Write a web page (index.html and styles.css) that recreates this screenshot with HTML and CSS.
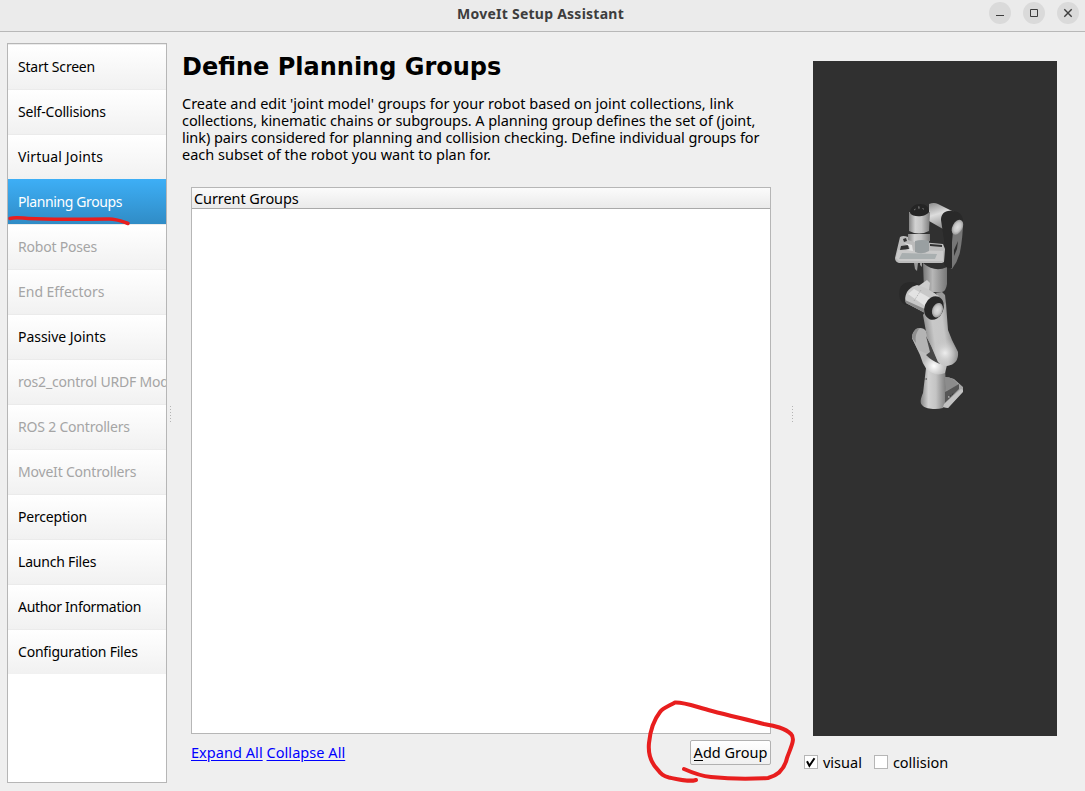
FILE: index.html
```html
<!DOCTYPE html>
<html lang="en">
<head>
<meta charset="utf-8">
<title>MoveIt Setup Assistant</title>
<link rel="stylesheet" href="styles.css">
</head>
<body>
<div class="window">
  <header class="titlebar">
    <h1 class="title">MoveIt Setup Assistant</h1>
    <div class="controls">
      <span class="control"><svg width="22" height="22"><path d="M7 13.500h8" /></svg></span>
      <span class="control"><svg width="22" height="22"><path d="M7.500 7.500h7v7h-7z" /></svg></span>
      <span class="control"><svg class="close" width="22" height="22"><path d="M7.300 7.300l7.400 7.400M14.700 7.300l-7.400 7.400" /></svg></span>
    </div>
  </header>
  <main class="content">
    <nav class="sidebar">
      <a class="item">Start Screen</a>
      <a class="item">Self-Collisions</a>
      <a class="item loose">Virtual Joints</a>
      <a class="item selected">Planning Groups</a>
      <a class="item disabled">Robot Poses</a>
      <a class="item disabled roomy">End Effectors</a>
      <a class="item roomy">Passive Joints</a>
      <a class="item disabled">ros2_control URDF Modifications</a>
      <a class="item disabled">ROS 2 Controllers</a>
      <a class="item disabled">MoveIt Controllers</a>
      <a class="item">Perception</a>
      <a class="item">Launch Files</a>
      <a class="item tight">Author Information</a>
      <a class="item">Configuration Files</a>
    </nav>
    <div class="splitter left"></div>
    <section class="page">
      <h2 class="heading">Define Planning Groups</h2>
      <p class="intro">Create and edit 'joint model' groups for your robot based on joint collections, link<br><span class="snug">collections, kinematic chains or subgroups. A planning group defines the set of (joint,</span><br><span class="snug">link) pairs considered for planning and collision checking. Define individual groups for</span><br>each subset of the robot you want to plan for.</p>
      <div class="tree"><div class="tree-head">Current Groups</div></div>
      <div class="actions">
        <div class="links"><a>Expand All</a> <a>Collapse All</a></div>
        <button class="add"><span class="mnemonic">A</span>dd Group</button>
      </div>
    </section>
    <div class="splitter right"></div>
    <aside class="viewer">
      <svg class="scene" viewBox="813 61 244 675" width="244" height="675">
        <defs>
          <linearGradient id="tube"><stop offset="0" stop-color="#858585"/><stop offset=".3" stop-color="#d2d2d2"/><stop offset=".6" stop-color="#c4c4c4"/><stop offset="1" stop-color="#7c7c7c"/></linearGradient>
          <linearGradient id="dim"><stop offset="0" stop-color="#777"/><stop offset=".4" stop-color="#b7b7b7"/><stop offset="1" stop-color="#777"/></linearGradient>
          <linearGradient id="arm" x1=".3" y1="0" x2=".6" y2="1"><stop offset="0" stop-color="#999"/><stop offset=".4" stop-color="#ddd"/><stop offset="1" stop-color="#858585"/></linearGradient>
          <linearGradient id="upper" gradientUnits="userSpaceOnUse" x1="923" y1="330" x2="952" y2="326"><stop offset="0" stop-color="#858585"/><stop offset=".35" stop-color="#c8c8c8"/><stop offset=".7" stop-color="#c6c6c6"/><stop offset="1" stop-color="#8c8c8c"/></linearGradient>
          <radialGradient id="cap"><stop offset="0" stop-color="#ddd"/><stop offset=".6" stop-color="#c8c8c8"/><stop offset="1" stop-color="#999"/></radialGradient>
          <radialGradient id="elbow" gradientUnits="userSpaceOnUse" cx="945" cy="353" r="15"><stop offset="0" stop-color="#eee"/><stop offset=".4" stop-color="#d4d4d4" stop-opacity=".8"/><stop offset="1" stop-color="#c0c0c0" stop-opacity="0"/></radialGradient>
          <radialGradient id="glow" gradientUnits="userSpaceOnUse" cx="934" cy="366" r="11"><stop offset="0" stop-color="#fff"/><stop offset="1" stop-color="#fff" stop-opacity="0"/></radialGradient>
        </defs>
        <g class="base">
          <path fill="#a6a6a6" d="M944 377q5 0 10 2l9 8v4l-15 17-5-1z"/>
          <path fill="url(#tube)" d="M926 368h19l1 19-1 18-2 3c-7 2-17 1-20-2-4-3-2-8 0-13z"/>
          <path fill="#8c8c8c" d="M945 377q4 0 8 2 5 4 5 6l-12 6z"/>
          <path fill="#555" d="M945 392l14-8v5l-14 14z"/>
          <path fill="#c2c2c2" d="M944 404l17-15 2 1v2l-15 16-5-1z"/>
          <path stroke="#333" stroke-width="1" stroke-dasharray="1.500 1" d="M948 398l6-5M921.500 387v4M923 379h4" fill="none"/>
          <path stroke="#eee" d="M948 397h1.500" fill="none"/>
        </g>
        <g class="shoulder">
          <path fill="#bdbdbd" d="M912 338l12-4 23 31-2 8q-9 4-18-3-5-7-7-15z"/>
          <path fill="url(#glow)" d="M920 355l27 10-2 8q-9 4-18-3-5-7-7-15z"/>
          <path fill="#b4b4b4" d="M912 338c0-5 3-10 8-10q4 0 6 3l7 19-3 5-12-5z"/>
          <path fill="#8e8e8e" d="M912 338c0-5 3-10 8-10-4 4-5 9-4 15z"/>
          <path fill="#474747" d="M926 336l6 11 8 17q-8-3-14-9l4-3z"/>
          <path fill="url(#upper)" d="M923 315q12-20 23-12l1 14 1 13 4 10 6 12q1 12-11 14-5 0-9-4l-6-14-5-11z"/>
          <path fill="url(#elbow)" d="M932 338h19l7 14q1 12-11 14-5 0-9-4l-6-14z"/>
        </g>
        <g class="middle">
          <path fill="url(#dim)" d="M923 263q12 10 24 4v17q-1 7-5 8-10 1-18-2z"/>
          <path fill="#cecece" d="M917 287l10-7 3 3-1 8-6 2z"/>
          <path fill="#999" d="M936 293l6-1 3 3 1 9-4 1z"/>
          <path fill="#292929" d="M899.500 297c-1-8 1-12 6-14q6-2 11 0l3 3-13 19c-4-1-6-4-7-8z"/>
          <path fill="#c8c8c8" d="M907 292q3-5 10-7 11 3 22 11l-12 18-21-11q-2-5 1-11z"/>
          <path fill="#e3e3e3" d="M908 294l6-5 16 9-5 8z"/>
          <path fill="#8a8a8a" d="M905 300l22 10v4l-21-11z"/>
          <path stroke="#999" stroke-width=".7" stroke-dasharray="1 1" d="M921 290l-7 11" fill="none"/>
          <ellipse cx="934" cy="308" rx="9.500" ry="12" transform="rotate(22 934 308)" fill="#272727"/>
          <ellipse cx="937.500" cy="310" rx="5.300" ry="7.500" transform="rotate(20 937 310)" fill="url(#cap)"/>
        </g>
        <g class="wrist">
          <path fill="url(#arm)" d="M929 204q5-2 9 0l16 8-11 17-14-8z"/>
          <path fill="#777" d="M946 232l17-10q0 14-3 30-2 9-8 17l-6-4z"/>
          <path fill="#292929" d="M941 220c0-6 4-10 11-9 7 0 11 4 11 10l-10 10-1 11v26c-4 1-7-1-8-4l1-10-1-14z"/>
          <path fill="#303030" d="M954 250l4-9-1 8-3 7z"/>
          <ellipse cx="957.500" cy="227" rx="5" ry="8" transform="rotate(28 957 227)" fill="url(#cap)"/>
        </g>
        <g class="hand">
          <path fill="#bbb" d="M900 237q3-2 8 0l13 5 22 2 2 5-1 13-2 1h-43q-4-1-4-5z"/>
          <path fill="#333" d="M903 239l3-1 1 3-3 1zM901 246l7-1 1 4-9 1zM930 244l12 1v2l-12-1z"/>
          <path fill="#cacaca" d="M898 250l45 1v10h-44l-3-3z"/>
          <path fill="#a9afb0" d="M902 253l35 1-2 5h-36z"/>
          <path fill="#999" d="M914 263h4l-1 8-2-2zM920 263h2v4l-2-2z"/>
          <path fill="#e4e4e4" d="M904 243l8 2 1 6-7-1 4-1-1-3z"/>
          <path fill="url(#tube)" d="M908 234h22v7q-10 4-22-1z"/>
          <path fill="#999fa1" d="M915 241q7-2 14 0v10q-7 4-14 1z"/>
          <path fill="url(#tube)" d="M909 212h21l-1 19q-10 5-20 0z"/>
          <path fill="#252525" d="M910 213c0-6 5-9 10-9 6 0 9 3 9 8-3 5-16 6-19 1z"/>
          <path fill="none" stroke="#999" stroke-width=".8" stroke-dasharray="1.500 3" d="M914 210q6-4 11 0M918 207h2"/>
        </g>
      </svg>
      <div class="checks">
        <label class="check"><span class="box"><svg width="12" height="12"><path d="M2 5.300l2.400 4.500L9.500 2.200"/></svg></span><span>visual</span></label>
        <label class="check"><span class="box"></span><span>collision</span></label>
      </div>
    </aside>
  </main>
  <svg class="annotations" width="1085" height="791" viewBox="0 0 1085 791">
    <path class="thin" d="M10 218.500C15 217 20 218 28 218.500C55 220 83 219 109 219C117 219 121 221 128 223.500"/>
    <path d="M696 780C689 782 681 780 669 777.500C663 776 661 774 658 770C651 763 648 753 649 743C650 732 653 721 660 712C663 708 669 706 675 702.500C685 702 696 707 712 711C731 716 749 720 764 724C775 726 785 728 791 734C796 739 790 749 787 758C785 767 780 775 768 778C750 779 731 779 711 777C701 776 693 773 684 769"/>
  </svg>
</div>
</body>
</html>
```
FILE: styles.css
```css
* { box-sizing: border-box; }
body { margin: 0; background: #efefef; color: #000; font: 14px/17px "Noto Sans", sans-serif; }
.window { position: relative; width: 1085px; height: 791px; overflow: hidden; display: flex; flex-direction: column; }
.titlebar { height: 32px; flex: none; background: #ebebeb; border-bottom: 1px solid #b8b8b8; display: grid; grid-template-columns: 1fr auto 1fr; }
.title { grid-column: 2; margin: 0; padding: 5px 4px 0 0; font-size: 14px; line-height: 18px; font-weight: 700; color: #3d3d3d; letter-spacing: .25px; white-space: nowrap; }
.controls { display: flex; justify-content: flex-end; gap: 12px; padding: 2px 6px 0 0; }
.control { width: 22px; height: 22px; border-radius: 50%; background: #dadada; }
.control svg { display: block; fill: none; stroke: #3d3d3d; stroke-width: 1; }
.control .close { stroke-width: 1.400; }
.content { flex: 1; display: flex; padding-left: 7px; }
.sidebar { width: 160px; height: 740px; margin-top: 11px; border: 1px solid #b6b6b6; background: #fff; overflow: hidden; }
.item { display: block; height: 45px; padding: 13px 0 0 10px; border-top: 1px solid #ebebeb; background: linear-gradient(#fff, #f1f1f1); white-space: nowrap; letter-spacing: -.2px; }
.item.loose { letter-spacing: .15px; }
.item.roomy { letter-spacing: -.03px; }
.item.tight { letter-spacing: -.3px; }
.item.selected { color: #fff; background: linear-gradient(#3daef5, #308cc6); border-color: #3daef5; letter-spacing: -.39px; }
.item.disabled { color: #a5a5a5; }
.splitter { width: 3px; height: 16px; margin-top: 374px; background: repeating-linear-gradient(#b4b4b4 0 1px, transparent 1px 3px) 1px 0 / 1px 16px no-repeat; }
.splitter.left { margin-left: 2px; }
.page { width: 589px; margin-left: 10px; }
.heading { margin: 19px 0 0; font: 700 24px/32px "DejaVu Sans", sans-serif; white-space: nowrap; }
.intro { margin: 12px 0 0; height: 68px; white-space: nowrap; font-size: 14.500px; line-height: 17px; }
.snug { letter-spacing: -.07px; }
.tree { height: 547px; margin: 24px 0 0 9px; border: 1px solid #b6b6b6; background: #fff; }
.tree-head { height: 21px; padding: 2px; border-bottom: 1px solid #a9a9a9; background: linear-gradient(#fbfbfb, #eaeaea); font-size: 14.500px; letter-spacing: -.08px; }
.actions { display: flex; justify-content: space-between; padding: 6px 0 0 9px; font-size: 14.500px; }
.links { padding-top: 4px; letter-spacing: .05px; }
.links a { color: #00f; text-decoration: underline; text-underline-offset: 2px; }
.add { width: 81px; height: 25px; padding: 0; border: 1px solid #b1b1b1; border-radius: 2px; background: linear-gradient(#fff, #f0f0f0); color: #000; font: 14.500px/21px "Noto Sans", sans-serif; white-space: nowrap; }
.mnemonic { border-bottom: 1px solid #000; display: inline-block; line-height: 16px; }
.splitter.right { margin-left: 20px; }
.viewer { width: 253px; margin-left: 10px; }
.scene { display: block; margin: 29px 0 0 9px; background: #303030; }
.checks { display: flex; gap: 12px; padding-top: 18px; font-size: 14.500px; }
.check { display: flex; gap: 5px; }
.box { width: 14px; height: 14px; margin-top: 1px; border: 1px solid #b6b6b6; background: #fff; flex: none; }
.box svg { display: block; fill: none; stroke: #000; stroke-width: 2; }
.annotations { position: absolute; inset: 0; pointer-events: none; fill: none; stroke: #e81e1e; stroke-width: 4; stroke-linecap: round; stroke-linejoin: round; }
.annotations .thin { stroke-width: 3.500; }
```
